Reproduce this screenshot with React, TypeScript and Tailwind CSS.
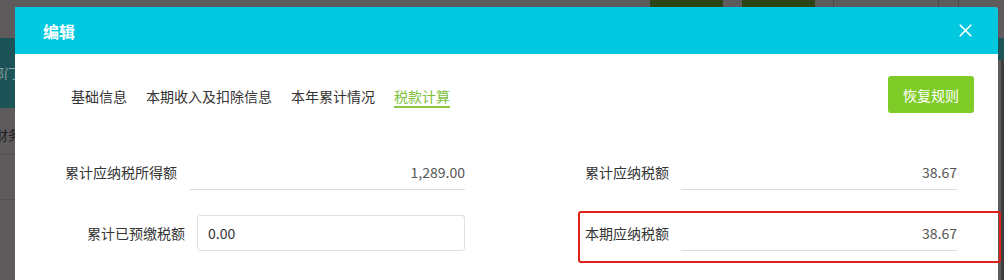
import { X } from 'lucide-react';

const tabs = ['基础信息', '本期收入及扣除信息', '本年累计情况', '税款计算'];

function ReadField({ label, value, labelW, gap, fieldW }: { label: string; value: string; labelW: string; gap: string; fieldW: string }) {
  return (
    <div className="flex items-center h-[36px]">
      <span className={`${labelW} ${gap} shrink-0 text-[14px] leading-[20px] text-[#333]`}>{label}</span>
      <div className={`${fieldW} h-[36px] flex items-center justify-end border-b border-[#dcdcdc] text-[14px] leading-[20px] text-[#555]`}>
        {value}
      </div>
    </div>
  );
}

export default function App() {
  return (
    <div
      className="relative w-[1004px] h-[280px] overflow-hidden bg-[#5f5b5c] flex flex-col"
      style={{ fontFamily: '"Noto Sans CJK SC", "Noto Sans", sans-serif' }}
    >
      {/* page behind the overlay, top edge */}
      <div className="h-[7px] shrink-0 flex">
        <div className="w-[650px]" />
        <div className="w-[73px] bg-[#2d4516]" />
        <div className="w-[19px]" />
        <div className="w-[73px] bg-[#2d4516]" />
        <div className="w-[18px]" />
        <div className="w-[105px] border-l border-[#4c4849]" />
        <div className="w-[20px] border-l border-[#4c4849]" />
        <div className="flex-1 border-l border-[#4c4849]" />
      </div>

      <div className="flex flex-1 min-h-0">
        {/* page behind the overlay, left edge */}
        <div className="w-[15px] shrink-0 flex flex-col overflow-hidden">
          <div className="h-[31px]" />
          <div className="h-[70px] bg-[#1b5357] flex items-center justify-end">
            <span className="text-[13px] leading-[16px] text-[#8aa3a4] whitespace-nowrap -mr-[2px]">部门</span>
          </div>
          <div className="h-[47px] pt-[8px] flex items-center justify-end border-b border-[#555152]">
            <span className="text-[13px] leading-[16px] text-[#1e1c1d] whitespace-nowrap -mr-[6px]">财务</span>
          </div>
          <div className="h-[45px] border-b border-[#555152]" />
        </div>

        {/* dialog */}
        <div className="w-[983px] shrink-0 bg-white rounded-tr-[4px] flex flex-col">
          <div className="h-[47px] shrink-0 bg-[#00c8df] rounded-tr-[4px] flex items-center justify-between pl-[28px] pr-[22px]">
            <span className="text-[16px] leading-[22px] font-bold text-white">编辑</span>
            <X size={21} strokeWidth={2} className="text-white" />
          </div>

          <div className="mt-[22px] h-[37px] flex items-center justify-between pl-[56px] pr-[24px]">
            <div className="flex gap-[19px] pt-[4px]">
              {tabs.map((t, i) => (
                <span
                  key={t}
                  className={`text-[14px] leading-[20px] border-b-2 ${
                    i === 3 ? 'text-[#7dc13c] border-[#8cc63f]' : 'text-[#333] border-transparent'
                  }`}
                >
                  {t}
                </span>
              ))}
            </div>
            <button className="w-[86px] h-[37px] rounded-[3px] bg-[#7fcc29] text-white text-[14px] leading-[20px]">
              恢复规则
            </button>
          </div>

          <div className="mt-[41px] pl-[45px] grid grid-cols-[405px_372px] gap-x-[120px] gap-y-[25px]">
            <ReadField label="累计应纳税所得额" value="1,289.00" labelW="w-[117px] text-right" gap="mr-[13px]" fieldW="w-[275px]" />
            <ReadField label="累计应纳税额" value="38.67" labelW="w-[84px]" gap="mr-[12px]" fieldW="w-[276px]" />

            <div className="flex items-center h-[36px]">
              <span className="w-[125px] mr-[12px] shrink-0 text-right text-[14px] leading-[20px] text-[#333]">累计已预缴税额</span>
              <input
                defaultValue="0.00"
                className="w-[268px] h-[36px] border border-[#dcdfe6] rounded-[3px] pl-[10px] text-[14px] text-[#333] outline-none"
              />
            </div>
            <ReadField label="本期应纳税额" value="38.67" labelW="w-[84px]" gap="mr-[12px]" fieldW="w-[276px]" />
          </div>
        </div>

        {/* page behind the overlay, right edge */}
        <div className="flex-1 flex flex-col">
          <div className="h-[31px]" />
          <div className="h-[22px] bg-[#1b5357]" />
          <div className="flex-1 border-r-[3px] border-[#3f3c3d]" />
        </div>
      </div>

      {/* annotation */}
      <div className="absolute left-[578px] top-[211px] w-[423px] h-[52px] border-2 border-[#e0201b] rounded-[3px] pointer-events-none" />
    </div>
  );
}
